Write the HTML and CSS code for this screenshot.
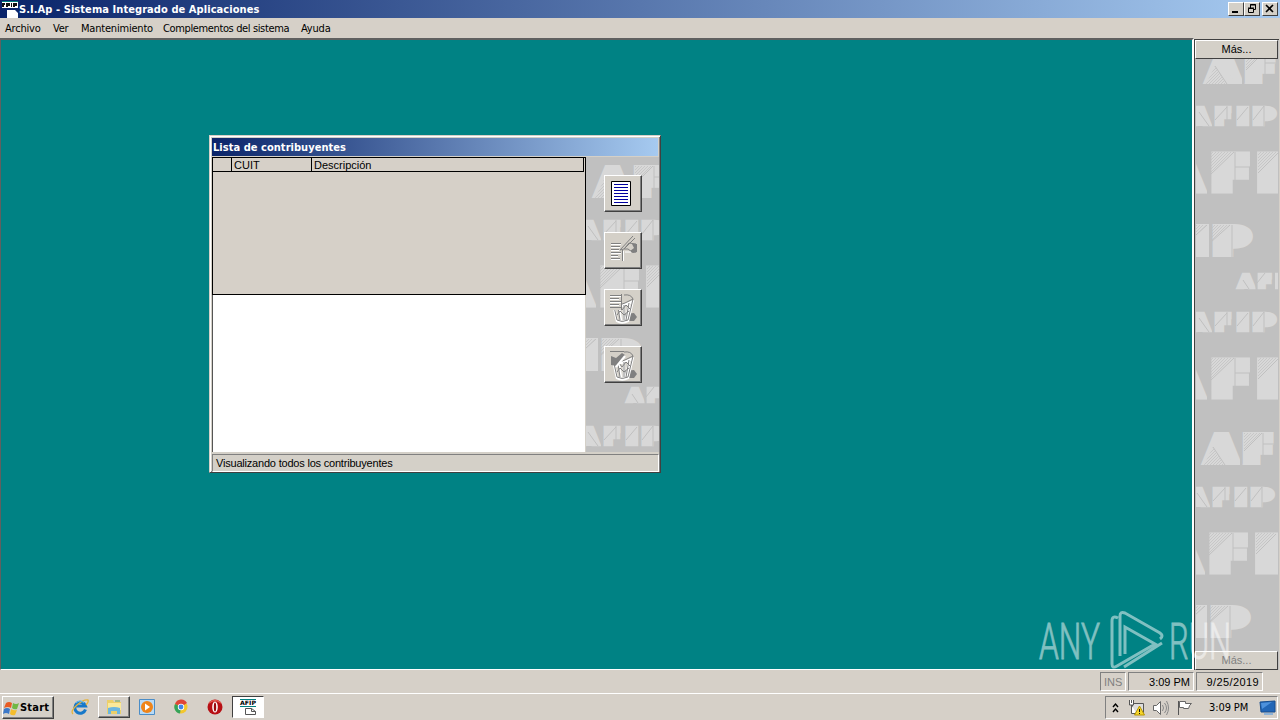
FILE: index.html
```html
<!DOCTYPE html>
<html lang="es">
<head>
<meta charset="utf-8">
<title>S.I.Ap - Sistema Integrado de Aplicaciones</title>
<link rel="stylesheet" href="styles.css">
</head>
<body>
<svg class="defs" aria-hidden="true">
  <defs>
    <pattern id="hatch" width="3" height="3" patternUnits="userSpaceOnUse"><path d="M-1 1L1-1M0 3L3 0M2 4L4 2" stroke="#c0c0c0" stroke-width=".7"/></pattern>
    <g id="mark-af" class="mark mid">
      <text x="13" y="28" font-size="33" textLength="29" lengthAdjust="spacingAndGlyphs">A</text>
      <text x="50" y="28" font-size="33" textLength="28" lengthAdjust="spacingAndGlyphs">F</text>
      <path class="fill" d="M22 18H33L38 32H18z"/>
      <path class="hatch" d="M10 32L19 14L30 32ZM50 0H68L50 18Z"/>
      <path class="cut" d="M19 14L31 32M50 18L68 0M69 0V32M69 11H82"/>
      <path class="gap" d="M47 -1V34"/>
    </g>
    <g id="mark-afip" class="mark low">
      <text x="-5" y="71.500" font-size="20.500" textLength="18" lengthAdjust="spacingAndGlyphs">A</text>
      <text x="19" y="71.500" font-size="20.500" textLength="16" lengthAdjust="spacingAndGlyphs">F</text>
      <text x="41" y="71.500" font-size="20.500" textLength="12" lengthAdjust="spacingAndGlyphs">I</text>
      <text x="57" y="71.500" font-size="20.500" textLength="22" lengthAdjust="spacingAndGlyphs">P</text>
      <path class="fill" d="M0 65H9V74H0z"/>
      <path class="cut" d="M3 60L13 74M19 68L31 55M41 68L52 55M57 68L68 54M68 54V74M31 54V74"/>
      <path class="gap" d="M17 53V75M39 53V75M54.500 53V75"/>
    </g>
    <g id="mark-big" class="mark top">
      <text x="-34" y="137" font-size="44" textLength="39" lengthAdjust="spacingAndGlyphs">A</text>
      <text x="16" y="137" font-size="44" textLength="37" lengthAdjust="spacingAndGlyphs">F</text>
      <text x="62" y="137" font-size="44" textLength="32" lengthAdjust="spacingAndGlyphs">I</text>
      <path class="hatch" d="M14 100H36L14 122ZM62 100H82L62 120Z"/>
      <path class="cut" d="M14 123L38 100M39 100V142M39 115H58M62 121L82 101"/>
      <path class="gap" d="M12 99V144M59 99V144"/>
    </g>
    <g id="mark-ip" class="mark mid">
      <text x="-13" y="201" font-size="33" textLength="25" lengthAdjust="spacingAndGlyphs">I</text>
      <text x="18" y="201" font-size="33" textLength="35" lengthAdjust="spacingAndGlyphs">P</text>
      <path class="hatch" d="M0 173H10L0 183ZM15 173H33L15 190Z"/>
      <path class="cut" d="M0 183L11 173M15 190L34 173M36 173V205"/>
      <path class="gap" d="M14 172V207"/>
    </g>
    <g id="mark-small" class="mark low">
      <text x="43" y="234.500" font-size="16.500" textLength="14" lengthAdjust="spacingAndGlyphs">A</text>
      <text x="62" y="234.500" font-size="16.500" textLength="13" lengthAdjust="spacingAndGlyphs">F</text>
      <text x="79" y="234.500" font-size="16.500" textLength="12" lengthAdjust="spacingAndGlyphs">I</text>
      <path class="fill" d="M47 229H54V237H47z"/>
      <path class="cut" d="M47 228L53 237M61 231L69 221"/>
      <path class="gap" d="M60.500 220V238M78 220V238"/>
    </g>
    <g id="tile"><use href="#mark-af"/><use href="#mark-afip"/><use href="#mark-big"/><use href="#mark-ip"/></g>
    <g id="bin">
      <path d="M19 23l10-1 3 4-3 4H18z" fill="#808080"/>
      <path d="M8 12l4 18q5 3 11 0l5-21M10 14l6 1 11-4M14 16l2 14M19 15v15M24 13l-3 17" fill="none" stroke="#fff" stroke-width="2.500"/>
      <path d="M8 11l4 18q5 3 11 0l5-21M8 11q6 4 12 1l8-4q-2-5-9-4M13 16l2 13M19 14v15M24 12l-3 17M11 18l3-3 3 4 4-5 4 4M12 24l3-4 4 4 5-4" fill="none" stroke="#808080"/>
    </g>
  </defs>
</svg>
<div class="desktop">
  <header class="titlebar">
    <svg class="app-icon" width="18" height="18"><path fill="#fff" d="M2 2h16v6H2zM7 10h8l3 3v5H7z"/><path fill="#008080" d="M2 1h16v1H2z"/><path fill="#111" d="M2 3h3v2H4v2H2zM6 3h4v3H8v1H6zM11 3h1v4h-1zM13 3h4v3h-2v1h-2z"/></svg>
    <span class="bold app-title">S.I.Ap - Sistema Integrado de Aplicaciones</span>
    <span class="winbtns">
      <b class="wb"><svg width="14" height="12"><path d="M3 9h6" stroke="#000" stroke-width="2"/></svg></b>
      <b class="wb"><svg width="14" height="12"><path d="M5.500 5V1.500h5v5H9M5 2h6M3.500 5.500h5v4h-5zM3 5h6" fill="none" stroke="#000"/></svg></b>
      <b class="wb close"><svg width="14" height="12"><path d="M3 2l7 7M10 2L3 9" stroke="#000" stroke-width="1.6"/></svg></b>
    </span>
  </header>
  <nav class="menubar"><span>Archivo</span><span>Ver</span><span>Mantenimiento</span><span class="m-comp">Complementos del sistema</span><span>Ayuda</span></nav>
  <main class="workspace">
    <section class="mdi"></section>
    <aside class="side">
      <button class="more">Más...</button>
      <svg class="art" width="82" height="592" viewBox="0 59 82 592"><use href="#tile" y="52"/><use href="#mark-small" y="52"/><use href="#mark-afip" y="258"/><use href="#mark-big" y="258"/><use href="#tile" y="433" x="-2"/></svg>
      <button class="more more-bottom">Más...</button>
    </aside>
  </main>
  <footer class="status"><span class="ins">INS</span><span class="st-time">3:09 PM</span><span class="st-date">9/25/2019</span></footer>
  <footer class="taskbar">
    <div class="start"><svg width="17" height="16"><path d="M3 3q3-2 6 0L8 8Q5 6 1 8z" fill="#e85c24"/><path d="M10 3q3 2 6 0l-2 6q-3 1-5-1z" fill="#70b844"/><path d="M1 9q3-2 6 0l-1 5q-3-2-6 0z" fill="#3c78c8"/><path d="M8 9q3 2 6 1l-2 5q-3 1-5-1z" fill="#f4bd2c"/></svg><span class="bold">Start</span></div>
    <div class="tb"><svg width="18" height="18"><path d="M14.500 11.500A5.500 5.500 0 1 1 14.500 8H5" fill="none" stroke="#1778c9" stroke-width="3"/><path d="M2 16Q-1 13 6 7T17 2q1 2-2 5" fill="none" stroke="#e7b43a" stroke-width="1.300"/><path d="M5 5q4-4 8 0" stroke="#61bff4" fill="none"/></svg></div>
    <div class="tb raised"><svg width="18" height="18"><path d="M2 2h6l1 2h7v12H2z" fill="#eccf69"/><path d="M3 5h13v7H3z" fill="#fae99a"/><path d="M3 16v-6q6-2 12 0v6h-3v-3H6v3z" fill="#6bb6df"/><path d="M10 3h5" stroke="#6ba24e"/></svg></div>
    <div class="tb"><svg width="18" height="18"><path d="M1.500 1.500h15v15h-15z" fill="#b8daf6" stroke="#4b8dc7"/><circle cx="9" cy="9" r="6" fill="#ef8419"/><path d="M7 5.500l5 3.500-5 3.500z" fill="#fff"/></svg></div>
    <div class="tb"><svg width="18" height="18"><circle cx="9" cy="9" r="6.500" fill="#f3c72d"/><path d="M9 9L3 6a6.500 6.500 0 0 1 12-1z" fill="#df4538"/><path d="M9 9L3 6a6.500 6.500 0 0 0 5 9.500z" fill="#35a35a"/><circle cx="9" cy="9" r="3.200" fill="#fff"/><circle cx="9" cy="9" r="2.400" fill="#4285e8"/></svg></div>
    <div class="tb"><svg width="18" height="18"><circle cx="9" cy="9" r="7.500" fill="#b70f14"/><path d="M3 5q6-5 12 0" fill="none" stroke="#e65a50" stroke-width="1.500"/><ellipse cx="9" cy="9" rx="2.800" ry="5.500" fill="#fff"/><ellipse cx="9" cy="9" rx="1.200" ry="4.500" fill="#9b080b"/></svg></div>
    <div class="tb pressed"><svg width="18" height="18"><path d="M1 1.500h16M1 8.500h16" stroke="#008080"/><text x="1" y="7.300" textLength="16" lengthAdjust="spacingAndGlyphs" class="tiny">AFIP</text><path d="M6.500 10.500h6l4 3v3h-10zM12.500 10.500v3h4" fill="#fff" stroke="#555"/></svg></div>
    <div class="tray">
      <svg class="chev" width="8" height="12"><path d="M1 5l2.500-3L6 5M1 10l2.500-3L6 10" fill="none" stroke="#000" stroke-width="1.400"/></svg>
      <svg class="net" width="18" height="18"><path d="M4.500 4.500h11v9h-11z" fill="#ddd" stroke="#555"/><path d="M1.500 1v5h4V1M3.500 1v3M3.500 6v8.500h5" fill="#fff" stroke="#555"/><path d="M11.500 7l5 9h-10z" fill="#f5d52c" stroke="#b79500"/><path d="M11.500 10v3M11.500 14v1" stroke="#111"/></svg>
      <svg class="vol" width="18" height="18"><path d="M1.500 6.500h3l4-4v13l-4-4h-3z" fill="#fff" stroke="#666"/><path d="M10.500 6q2 3 0 6M12.500 4q4 5 0 10M14.500 2q4 7 0 14" fill="none" stroke="#888"/></svg>
      <svg class="flag" width="18" height="18"><path d="M2.500 2v14" stroke="#555"/><path d="M3.500 2.500h6v2h6q-2 1-3 5h-5v-1h-4z" fill="#fff" stroke="#666"/></svg>
      <span class="clock">3:09 PM</span>
      <svg class="mon" width="18" height="16"><path d="M1 2l15-1v11H2z" fill="#2266b6" stroke="#174d8e"/><path d="M2 3l11-1L3 9z" fill="#4d91dc"/><path d="M5 14h9" stroke="#8db2d7" stroke-width="2"/></svg>
    </div>
  </footer>

  <section class="dialog">
    <div class="dlg-title bold">Lista de contribuyentes</div>
    <div class="dlg-body">
      <div class="list">
        <div class="grid"><div class="head"><span></span><span>CUIT</span><span>Descripción</span></div></div>
      </div>
      <div class="tools">
        <svg class="dlg-art" width="73" height="295" viewBox="0 157 73 295"><use href="#tile" y="166" x="-1"/><use href="#mark-small" y="166" x="-1"/><use href="#mark-afip" y="372" x="-1"/></svg>
        <div class="buttons">
          <button><svg width="34" height="34"><path d="M6.500 4.500h19v24h-19z" fill="#fff" stroke="#000"/><path d="M9 7.500h14M9 10.500h14M9 13.500h14M9 16.500h14M9 19.500h14M9 22.500h14M9 25.500h14" stroke="#0000a0"/></svg></button>
          <button><svg width="34" height="34"><path d="M6 10.500h10M6 13.500h9M6 16.500h8M6 19.500h10M6 22.500h7M6 25.500h9M18.500 17v10" stroke="#fff"/><path d="M6 9.500h10M6 12.500h9M6 15.500h8M6 18.500h10M6 21.500h7M6 24.500h9M17.500 16v11" stroke="#808080"/><path d="M15 16L28 2M15 16l4-1L30 4M19 15l5-6 7 1v8h-4l-4-3z" fill="#d4d0c8" stroke="#808080"/><path d="M27 10h5v8l-4 1-3-2 4-3z" fill="#808080"/><path d="M20 18h6" stroke="#fff"/></svg></button>
          <button><svg width="34" height="34"><use href="#bin"/><path d="M5 3h12v16H5z" fill="#d4d0c8"/><path d="M5 4.500h11M5 7.500h9M5 10.500h11M5 13.500h9M5 16.500h11M16.500 3v16" stroke="#808080"/><path d="M5 5.500h11M5 8.500h9M5 11.500h11M5 14.500h9" stroke="#fff"/></svg></button>
          <button><svg width="34" height="34"><use href="#bin"/><path d="M5 3.500h14" stroke="#808080"/><path d="M6 8l5 2 6-5 3 2-8 11-6-1z" fill="#808080"/><path d="M11 19l9-11" stroke="#fff" stroke-width="2"/></svg></button>
        </div>
      </div>
    </div>
    <div class="dlg-status">Visualizando todos los contribuyentes</div>
  </section>

  <svg class="watermark" width="200" height="66" viewBox="0 0 200 66">
    <text x="3" y="52" textLength="61" lengthAdjust="spacingAndGlyphs">ANY</text>
    <text x="133" y="52" textLength="62" lengthAdjust="spacingAndGlyphs">RUN</text>
    <path d="M82 11q-6-3-6 3v43q0 5 5 2l38-22L89 20v27M84 49V9q0-5 5-3l35 20q4 3 0 6M126 36L88 60"/>
  </svg>
</div>
</body>
</html>
```

FILE: styles.css
```css
* { box-sizing: border-box; }
body { margin: 0; overflow: hidden; }
.defs { position: absolute; width: 0; height: 0; }
.desktop { position: relative; display: flex; flex-direction: column; width: 1280px; height: 720px; background: #d6d0c8; color: #000; font: 11px/14px "DejaVu Sans Condensed", "DejaVu Sans", sans-serif; white-space: nowrap; }
svg { display: block; flex: none; }
button { font: inherit; color: inherit; padding: 0; border-radius: 0; }
.bold { font-weight: bold; }
.titlebar { display: flex; height: 18px; background: linear-gradient(90deg, #0a246a, #a6caf0); color: #fff; }
.app-icon { margin-left: 0; margin-right: 1px; }
.app-title { line-height: 19px; letter-spacing: .07px; }
.winbtns { display: flex; margin: 2px 2px 0 auto; }
.wb { width: 16px; height: 14px; background: #d4d0c8; border: 1px solid; border-color: #fff #404040 #404040 #fff; }
.close { margin-left: 2px; }
.menubar { display: grid; grid-template-columns: 48px 28px 82px 138px 60px; height: 20px; padding: 4px 5px 0; letter-spacing: -.2px; }
.m-comp { letter-spacing: -.37px; }
.workspace { display: flex; height: 632px; }
.mdi { width: 1194px; background: #008284; border: solid; border-width: 2px 2px 1px 1px; border-color: #606060 #fff #fff #606060; }
.side { display: flex; flex-direction: column; width: 85px; margin-top: 1px; border-left: 1px solid #404040; border-top: 1px solid #404040; background: #c0c0c0; }
.side .more { width: 83px; height: 19px; flex: none; background: #d4d0c8; border: 1px solid; border-color: #fff #404040 #404040 #fff; font-family: "Liberation Sans", sans-serif; padding-bottom: 2px; }
.side .more-bottom { color: #808080; }
.art { background: #c0c0c0; margin-left: 1px; }
.mark text { font-family: "DejaVu Sans", sans-serif; font-weight: bold; fill: #d8d8d8; stroke: #d8d8d8; stroke-miterlimit: 2; }
.top text { stroke-width: 9; }
.mid text { stroke-width: 8; }
.low text { stroke-width: 4.500; }
.fill { fill: #d8d8d8; }
.hatch { fill: url(#hatch); }
.cut { fill: none; stroke: #c0c0c0; stroke-width: 1; }
.gap { stroke: #c0c0c0; stroke-width: 2; }
.status { display: flex; justify-content: flex-end; gap: 2px; height: 23px; padding: 2px 17px 2px 0; font-family: "Liberation Sans", sans-serif; }
.status span { height: 19px; padding: 2px 3px 0; text-align: right; border: 1px solid; border-color: #808080 #fff #fff #808080; }
.status .ins { width: 26px; color: #808080; }
.st-time { width: 66px; }
.status .st-date { width: 67px; letter-spacing: .4px; }
.taskbar { display: flex; height: 27px; border-top: 1px solid #fff; padding: 2px 2px 1px; align-items: flex-start; }
.start { display: flex; align-items: center; width: 52px; height: 23px; margin-right: 10px; background: #d4d0c8; border: 1px solid; border-color: #fff #404040 #404040 #fff; box-shadow: inset -1px -1px #808080; letter-spacing: .2px; }
.tb { display: flex; align-items: center; justify-content: center; width: 32px; height: 22px; margin-right: 1.700px; }
.raised { border: 1px solid; border-color: #fff #404040 #404040 #fff; box-shadow: inset -1px -1px #808080; }
.pressed { border: 1px solid; border-color: #404040 #fff #fff #404040; background: #fff; }
.tiny { font: bold 6px "DejaVu Sans", sans-serif; }
.tray { display: flex; align-items: center; width: 173px; height: 23px; margin-left: auto; padding-left: 6px; border: 1px solid; border-color: #808080 #fff #fff #808080; }
.net { margin-left: 8px; }
.vol { margin-left: 6px; }
.flag { margin-left: 6px; }
.clock { width: 40px; margin-left: 15px; letter-spacing: -.1px; }
.mon { margin-left: 11px; }
.dialog { position: absolute; left: 209px; top: 135px; width: 452px; height: 338px; background: #d4d0c8; border: 1px solid; border-color: #d4d0c8 #404040 #404040 #d4d0c8; box-shadow: inset 1px 1px #fff, inset -1px -1px #808080; padding: 2px; }
.dlg-title { height: 18px; padding-left: 1px; line-height: 19px; letter-spacing: .04px; color: #fff; background: linear-gradient(90deg, #0a246a, #a6caf0); }
.dlg-body { display: flex; height: 295px; margin-top: 1px; }
.list { width: 373px; background: #fff; border-left: 1px solid #555; }
.grid { width: 374px; height: 138px; margin-left: -1px; background: #d6d0c8; border: 1px solid #000; font-family: "Liberation Sans", sans-serif; }
.head { display: grid; grid-template-columns: 19px 80px 1fr; height: 14px; width: 371px; border-bottom: 1px solid #000; border-right: 1px solid #000; }
.head span { padding-left: 2px; line-height: 14px; border-right: 1px solid #000; height: 13px; }
.head span:last-child { border: 0; }
.tools { display: grid; width: 73px; margin-left: 1px; background: #c0c0c0; }
.dlg-art, .buttons { grid-area: 1 / 1; }
.buttons { display: flex; flex-direction: column; gap: 20px; padding: 18px 0 0 18px; }
.buttons button { width: 38px; height: 37px; background: #d4d0c8; border: 1px solid; border-color: #fff #404040 #404040 #fff; box-shadow: inset -1px -1px #808080; }
.dlg-status { height: 18px; width: 447px; margin-top: 2px; padding: 1px 3px; letter-spacing: -.2px; border: 1px solid; border-color: #808080 #fff #fff #808080; font-family: "Liberation Sans", sans-serif; }
.watermark { position: absolute; left: 1036px; top: 607px; opacity: .5; }
.watermark text { font: 300 50px Roboto, sans-serif; fill: #fff; stroke: #fff; stroke-width: .8; }
.watermark path { fill: none; stroke: #fff; stroke-width: 3; }
```
